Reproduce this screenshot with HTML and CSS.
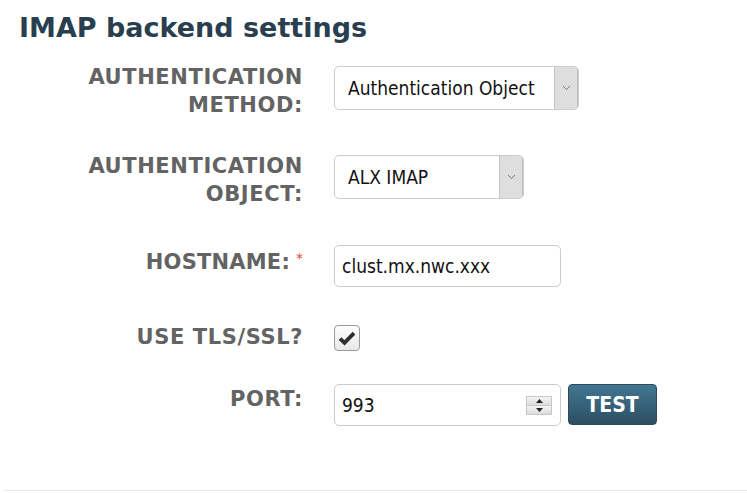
FILE: index.html
```html
<!DOCTYPE html>
<html lang="en">
<head>
    <meta charset="UTF-8">
    <meta name="viewport" content="width=device-width, initial-scale=1.0">
    <title>IMAP backend settings</title>
    <link rel="stylesheet" href="styles.css">
</head>
<body>
    <div class="panel">
        <h1>IMAP backend settings</h1>

        <div class="form">
            <div class="form-row row-method">
                <label class="field-label two-line">AUTHENTICATION<br>METHOD:</label>
                <div class="select select-wide">
                    <span class="select-value">Authentication Object</span>
                    <span class="select-arrow">
                        <svg width="9" height="6" viewBox="0 0 9 6"><path d="M1 1l3.5 3.5L8 1" fill="none" stroke="#777" stroke-width="1"/></svg>
                    </span>
                </div>
            </div>

            <div class="form-row row-object">
                <label class="field-label two-line">AUTHENTICATION<br>OBJECT:</label>
                <div class="select select-narrow">
                    <span class="select-value">ALX IMAP</span>
                    <span class="select-arrow">
                        <svg width="9" height="6" viewBox="0 0 9 6"><path d="M1 1l3.5 3.5L8 1" fill="none" stroke="#777" stroke-width="1"/></svg>
                    </span>
                </div>
            </div>

            <div class="form-row row-host">
                <label class="field-label one-line">HOSTNAME:<span class="required">*</span></label>
                <div class="text-input">
                    <span class="input-value">clust.mx.nwc.xxx</span>
                </div>
            </div>

            <div class="form-row row-tls">
                <label class="field-label check-label">USE TLS/SSL?</label>
                <div class="checkbox">
                    <svg width="18" height="15" viewBox="0 0 18 15"><path d="M2 7.6l4.5 4.3L16 2.2" fill="none" stroke="#2e2e2e" stroke-width="3.8"/></svg>
                </div>
            </div>

            <div class="form-row row-port">
                <label class="field-label port-label">PORT:</label>
                <div class="port-group">
                    <div class="text-input">
                        <span class="input-value">993</span>
                        <span class="spinner">
                            <span class="spin-btn"><svg width="7" height="4" viewBox="0 0 7 4"><path d="M0 4L3.5 0L7 4z" fill="#222"/></svg></span>
                            <span class="spin-btn"><svg width="7" height="4" viewBox="0 0 7 4"><path d="M0 0L3.5 4L7 0z" fill="#222"/></svg></span>
                        </span>
                    </div>
                    <button class="btn-test">TEST</button>
                </div>
            </div>
        </div>

        <div class="divider"></div>
    </div>
</body>
</html>
```

FILE: styles.css
```css
body {
    margin: 0;
    background: #fff;
    font-family: "DejaVu Sans", Verdana, sans-serif;
}

.panel {
    padding-left: 19px;
}

h1 {
    margin: 0;
    padding-top: 12px;
    font-size: 27px;
    line-height: 32px;
    font-weight: bold;
    color: #293f50;
}

.form {
    display: flex;
    flex-direction: column;
}

.form-row {
    display: grid;
    grid-template-columns: 284px auto;
    column-gap: 31px;
    align-items: start;
    justify-items: start;
}

.row-method { margin-top: 22px; }
.row-object { margin-top: 36px; }
.row-host   { margin-top: 37px; }
.row-tls    { margin-top: 38px; }
.row-port   { margin-top: 33px; }

.field-label {
    justify-self: end;
    text-align: right;
    font-size: 21px;
    line-height: 28px;
    letter-spacing: 0.6px;
    font-weight: bold;
    color: #636363;
    white-space: nowrap;
}

.two-line   { margin-top: -3px; }
.one-line   { padding-top: 3px; letter-spacing: 0.2px; }
.check-label { margin-top: -2px; }
.port-label { padding-top: 1px; }

.required {
    margin-left: 6px;
    color: #e0443a;
    font-size: 14px;
    font-weight: normal;
    letter-spacing: 0;
    vertical-align: top;
    line-height: 20px;
}

/* select look-alike: value + grey arrow strip */
.select {
    display: flex;
    height: 44px;
    box-sizing: border-box;
    border: 1px solid #c9ced2;
    border-radius: 5px;
    background: #fff;
    overflow: hidden;
    font-family: "DejaVu Sans Condensed", Tahoma, sans-serif;
    font-size: 19px;
    color: #111;
}

.select-wide   { width: 245px; }
.select-narrow { width: 190px; }

.select-value {
    flex: 1;
    padding-left: 13px;
    line-height: 42px;
    white-space: nowrap;
}

.select-arrow {
    width: 23px;
    display: flex;
    align-items: center;
    justify-content: center;
    background: #dedede;
    border-left: 1px solid #c4c4c4;
    box-shadow: inset -1px 0 0 #bdbdbd;
}

.text-input {
    display: flex;
    align-items: center;
    width: 227px;
    height: 42px;
    box-sizing: border-box;
    border: 1px solid #c9ced2;
    border-radius: 5px;
    background: #fff;
    font-family: "DejaVu Sans Condensed", Tahoma, sans-serif;
    font-size: 19px;
    color: #111;
}

.input-value {
    flex: 1;
    padding-left: 7px;
}

.spinner {
    display: flex;
    flex-direction: column;
    width: 24px;
    margin-right: 8px;
    border: 1px solid #c8c8c8;
}

.spin-btn {
    height: 8px;
    display: flex;
    align-items: center;
    justify-content: center;
    background: linear-gradient(#f4f4f4, #dcdcdc);
}

.spin-btn + .spin-btn {
    border-top: 1px solid #c8c8c8;
}

.checkbox {
    width: 26px;
    height: 26px;
    box-sizing: border-box;
    border: 1px solid #9a9a9a;
    border-radius: 4px;
    background: linear-gradient(#fdfdfd, #e8e8e8);
    display: flex;
    align-items: center;
    justify-content: center;
}

.port-group {
    display: flex;
    align-items: center;
    gap: 7px;
}

.btn-test {
    width: 89px;
    height: 41px;
    margin-top: -1px;
    border: 1px solid #2b4a5c;
    border-radius: 4px;
    background: linear-gradient(#427791, #2c4e62);
    color: #fff;
    font-family: "DejaVu Sans Condensed", Tahoma, sans-serif;
    font-size: 21px;
    font-weight: bold;
}

.divider {
    margin-top: 64px;
    margin-left: -15px;
    border-top: 1px solid #e6e6e6;
}
```
